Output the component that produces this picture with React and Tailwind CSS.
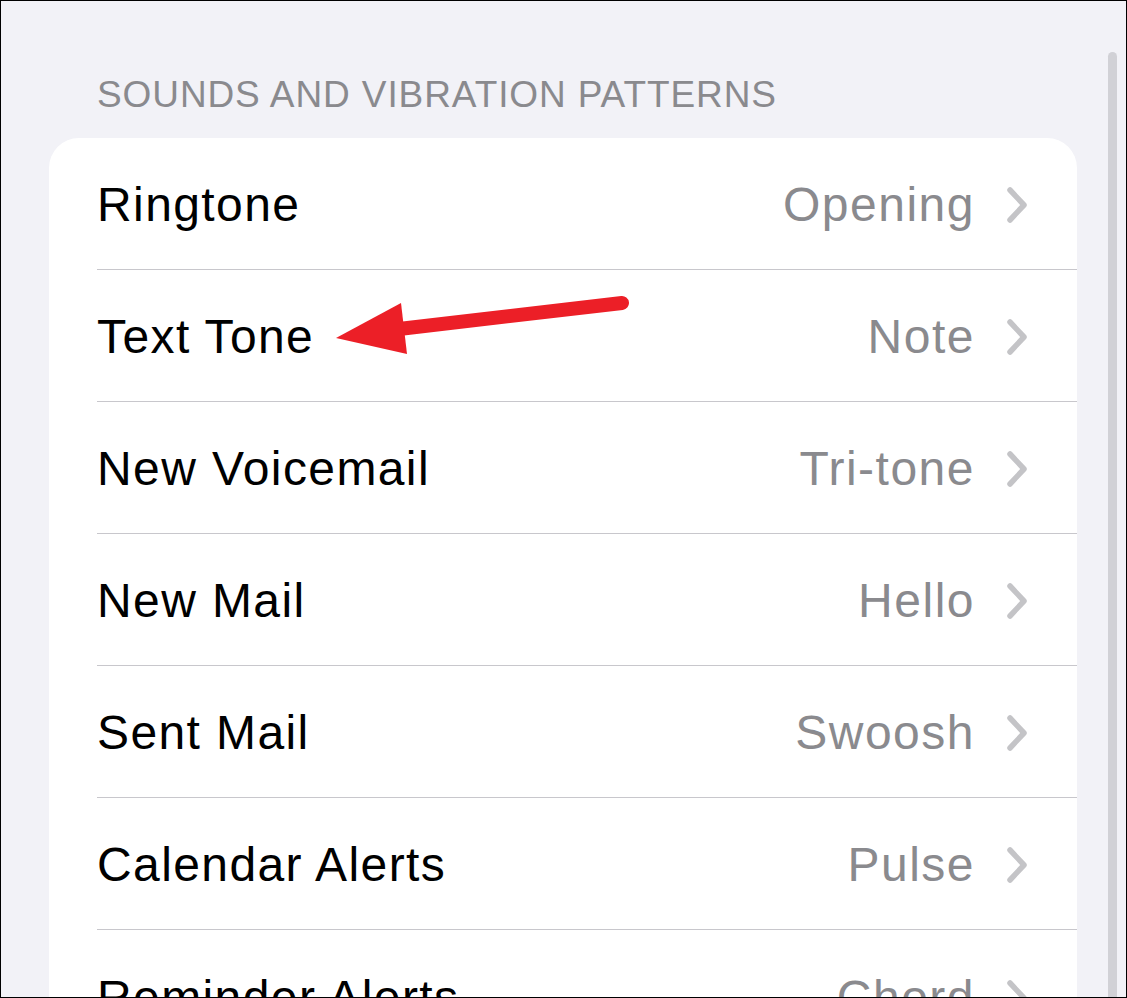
import React from 'react';

const rows = [
    { label: 'Ringtone', value: 'Opening' },
    { label: 'Text Tone', value: 'Note' },
    { label: 'New Voicemail', value: 'Tri-tone' },
    { label: 'New Mail', value: 'Hello' },
    { label: 'Sent Mail', value: 'Swoosh' },
    { label: 'Calendar Alerts', value: 'Pulse' },
    { label: 'Reminder Alerts', value: 'Chord' },
];

const Chevron = () => (
    <svg width="22" height="38" viewBox="0 0 22 38" className="shrink-0">
        <polyline
            points="4,4 18,19 4,34"
            fill="none"
            stroke="#c4c4c7"
            strokeWidth="5.5"
            strokeLinecap="round"
            strokeLinejoin="round"
        />
    </svg>
);

const Row = ({ label, value, last }) => (
    <div className={`ml-[48px] h-[132px] flex items-center pt-[3px] pr-[49px] ${last ? '' : 'border-b border-[#c8c7cc]'}`}>
        <span className="flex-1 text-[48px] leading-none tracking-[1.4px] text-black">{label}</span>
        <span className="text-[48px] leading-none tracking-[1.5px] text-[#8a8a8e] mr-[31px]">{value}</span>
        <Chevron />
    </div>
);

const App = () => {
    return (
        <div
            className="relative w-[1127px] h-[998px] overflow-hidden border border-black bg-[#f2f2f7]"
            style={{ fontFamily: '"Liberation Sans", Arial, sans-serif' }}
        >
            <div className="pl-[48px] pt-[75px]">
                <h2 className="pl-[48px] text-[37px] leading-none tracking-[0.9px] text-[#8a8a8e]">
                    SOUNDS AND VIBRATION PATTERNS
                </h2>

                <div className="mt-[25px] w-[1028px] bg-white rounded-[30px]">
                    {rows.map((row, index) => (
                        <Row key={row.label} {...row} last={index === rows.length - 1} />
                    ))}
                </div>
            </div>

            {/* scroll indicator */}
            <div className="absolute left-[1107px] top-[51px] w-[9px] h-[960px] rounded-full bg-[#d1d1d6]" />

            {/* annotation arrow */}
            <svg className="absolute left-0 top-0 pointer-events-none" width="1127" height="998">
                <line x1="621" y1="302" x2="398" y2="328" stroke="#ec1f27" strokeWidth="14" strokeLinecap="round" />
                <polygon points="335,337 400,302 406,353" fill="#ec1f27" />
            </svg>
        </div>
    );
};

export default App;
